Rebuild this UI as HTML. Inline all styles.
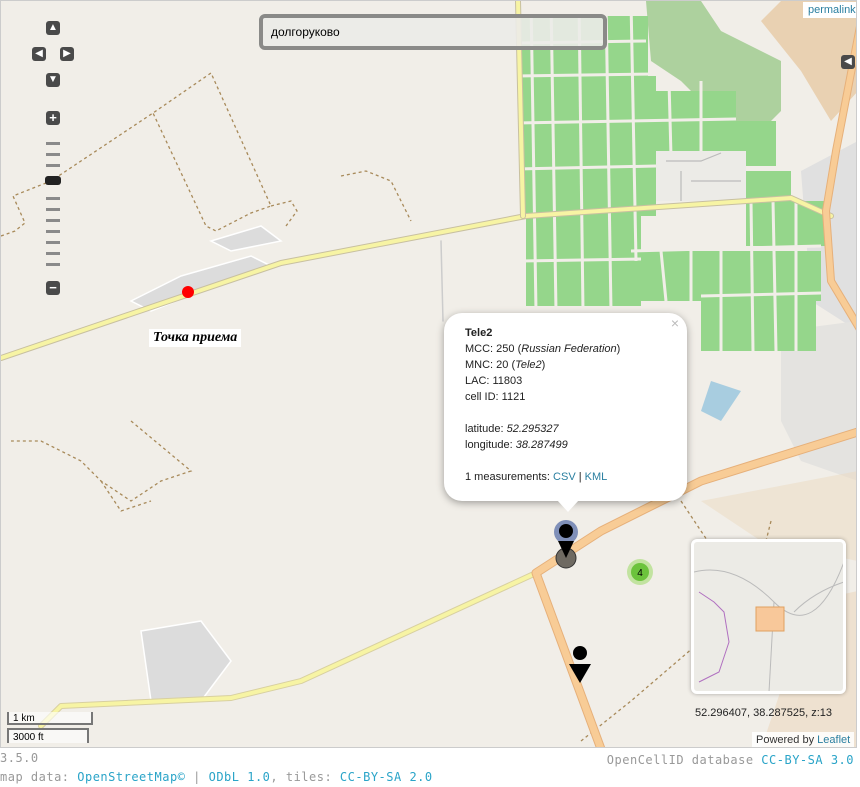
<!DOCTYPE html>
<html><head><meta charset="utf-8"><style>
body{margin:0;width:860px;height:787px;background:#fff;overflow:hidden;font-family:"Liberation Sans",sans-serif;position:relative}
#map{position:absolute;left:0;top:0;width:857px;height:748px;border:1px solid #ccc;box-sizing:border-box;overflow:hidden;background:#f1eee8}
.btn{position:absolute;width:14px;height:14px;background:#4a4a4a;border-radius:3px;color:#fff;font-size:10px;line-height:14px;text-align:center}
.tick{position:absolute;left:45px;width:14px;height:3px;background:#8a8a8a}
.foot{position:absolute;font-family:"DejaVu Sans Mono","Liberation Mono",monospace;font-size:12px;color:#999;letter-spacing:0.5px}
.foot a{color:#2aa4c8;text-decoration:none}
</style></head><body>
<div id="map">
<svg width="857" height="748" style="position:absolute;left:0;top:0">
<polygon points="780,0 857,0 857,90 830,120 800,70 760,20" fill="#e9d1b2"/>
<polygon points="800,170 857,140 857,330 810,300" fill="#e0e0e0"/>
<polygon points="645,0 700,0 720,30 780,60 780,110 760,130 720,120 680,80 650,60" fill="#add19e"/>
<polygon points="780,330 857,320 857,480 800,460 780,420" fill="#e4e3e0"/>
<polygon points="700,500 857,470 857,560 760,540" fill="#ecd9c0" opacity=".5"/>
<polygon points="810,600 857,590 857,748 760,748" fill="#ecd9c0" opacity=".6"/>
<g fill="#95d68b">
<rect x="517" y="15" width="130" height="60"/>
<rect x="520" y="75" width="135" height="140"/>
<rect x="525" y="215" width="115" height="90"/>
<rect x="640" y="90" width="95" height="65"/>
<rect x="735" y="120" width="40" height="45"/>
<rect x="745" y="170" width="45" height="30"/>
<rect x="745" y="200" width="80" height="45"/>
<rect x="635" y="250" width="185" height="50"/>
<rect x="700" y="300" width="115" height="50"/>
</g>
<g stroke="#f1eee8" stroke-width="3">
<line x1="530" y1="0" x2="535" y2="310"/><line x1="550" y1="0" x2="555" y2="310"/><line x1="578" y1="0" x2="582" y2="310"/><line x1="605" y1="0" x2="610" y2="310"/><line x1="630" y1="0" x2="635" y2="260"/>
<line x1="668" y1="80" x2="670" y2="155"/><line x1="700" y1="80" x2="700" y2="155"/>
<line x1="660" y1="250" x2="665" y2="300"/><line x1="690" y1="250" x2="690" y2="300"/><line x1="720" y1="250" x2="720" y2="350"/><line x1="750" y1="200" x2="752" y2="350"/><line x1="772" y1="200" x2="775" y2="350"/><line x1="795" y1="200" x2="795" y2="350"/>
<line x1="515" y1="42" x2="645" y2="40"/><line x1="515" y1="75" x2="655" y2="73"/><line x1="515" y1="122" x2="735" y2="118"/><line x1="515" y1="168" x2="655" y2="165"/><line x1="520" y1="260" x2="640" y2="258"/><line x1="630" y1="250" x2="820" y2="245"/><line x1="700" y1="295" x2="820" y2="292"/>
</g>
<rect x="655" y="150" width="90" height="50" fill="#ecebe7"/>
<g stroke="#bbb" stroke-width="1.2" fill="none"><polyline points="665,160 700,160 720,152"/><polyline points="680,170 680,200"/><polyline points="690,180 740,180"/></g>
<g fill="none" stroke="#a88a5a" stroke-width="1.3" stroke-dasharray="3,3">
<polyline points="0,235 14,230 24,222 12,195 50,180 152,112 210,72 270,205 250,212 215,230 205,225 152,112"/>
<polyline points="270,205 290,200 296,210 285,225"/>
<polyline points="340,175 365,170 390,180 410,220"/>
<polyline points="130,420 190,470 160,480 130,500 100,480 80,460 40,440 10,440"/>
<polyline points="100,480 120,510 150,500"/>
<polyline points="680,500 700,530 720,560"/>
<polyline points="770,520 760,560 770,600"/>
<polyline points="580,740 630,700 700,640"/>
</g>
<g fill="#dcdcdc" stroke="#fff" stroke-width="1.5">
<polygon points="130,300 180,275 250,255 270,265 200,290 150,310"/>
<polygon points="210,240 260,225 280,240 230,250"/>
<polygon points="140,630 200,620 230,660 200,700 150,700"/>
</g>
<polygon points="710,380 740,390 720,420 700,410" fill="#a8cde0"/>
<g fill="none" stroke-linecap="round" stroke-linejoin="round">
<polyline points="0,357 280,262 525,215 790,197 830,215" stroke="#c8c0a0" stroke-width="6"/>
<polyline points="0,357 280,262 525,215 790,197 830,215" stroke="#f7f4a4" stroke-width="4"/>
<polyline points="517,0 522,215" stroke="#c8c0a0" stroke-width="6"/>
<polyline points="517,0 522,215" stroke="#f7f4a4" stroke-width="4"/>
<polyline points="535,572 300,680 230,697 60,705 40,725" stroke="#d8d0a0" stroke-width="6"/>
<polyline points="535,572 300,680 230,697 60,705 40,725" stroke="#f7f4a4" stroke-width="4"/>
<polyline points="860,430 700,480 600,530 535,572 600,748" stroke="#e6b07a" stroke-width="9"/>
<polyline points="860,430 700,480 600,530 535,572 600,748" stroke="#f8cc96" stroke-width="7"/>
<polyline points="860,20 835,150 825,210 830,280 860,330" stroke="#e6b07a" stroke-width="8"/>
<polyline points="860,20 835,150 825,210 830,280 860,330" stroke="#f8cc96" stroke-width="6"/>
<polyline points="440,240 442,320" stroke="#ccc" stroke-width="1.5"/>
</g>
<circle cx="187" cy="291" r="6" fill="#f00"/>
<circle cx="639" cy="571" r="13" fill="#b7e08d" opacity=".8"/>
<circle cx="639" cy="571" r="9" fill="#6cc33c"/>
<text x="639" y="575" font-size="10" text-anchor="middle" font-family="Liberation Sans">4</text>
<circle cx="565" cy="557" r="10" fill="#6f6a62" stroke="#333"/>
<circle cx="565" cy="531" r="12" fill="#7f8fb8"/>
<circle cx="565" cy="530" r="7" fill="#000"/>
<polygon points="557,540 573,540 565,557" fill="#000"/>
<circle cx="579" cy="652" r="7" fill="#000"/>
<polygon points="568,663 590,663 579,682" fill="#000"/>
</svg>
<div class="btn" style="left:45px;top:20px">▲</div>
<div class="btn" style="left:31px;top:46px">◀</div>
<div class="btn" style="left:59px;top:46px">▶</div>
<div class="btn" style="left:45px;top:72px">▼</div>
<div class="btn" style="left:45px;top:110px;font-size:13px;font-weight:bold">+</div>
<div class="tick" style="top:141px"></div><div class="tick" style="top:152px"></div><div class="tick" style="top:163px"></div>
<div style="position:absolute;left:44px;top:175px;width:16px;height:9px;background:#222;border-radius:3px"></div>
<div class="tick" style="top:196px"></div><div class="tick" style="top:207px"></div><div class="tick" style="top:218px"></div><div class="tick" style="top:229px"></div><div class="tick" style="top:240px"></div><div class="tick" style="top:251px"></div><div class="tick" style="top:262px"></div>
<div class="btn" style="left:45px;top:280px;font-size:13px;font-weight:bold">−</div>
<div style="position:absolute;left:258px;top:13px;width:340px;height:28px;border:4px solid #8a8a88;border-radius:6px;background:rgba(235,235,232,.9)"><span style="position:absolute;left:8px;top:7px;font-size:12px">долгоруково</span></div>
<div style="position:absolute;left:802px;top:1px;background:#fff;padding:2px 5px;font-size:11px;color:#2a7fa0">permalink</div>
<div class="btn" style="left:840px;top:54px">◀</div>
<div style="position:absolute;left:148px;top:328px;background:#fff;padding:1px 4px;font:italic bold 14px 'Liberation Serif',serif">Точка приема</div>
<div style="position:absolute;left:443px;top:312px;width:243px;height:188px;background:#fff;border-radius:18px;box-shadow:0 2px 8px rgba(0,0,0,.35);font-size:11px;line-height:16px;color:#222;padding:12px 0 0 21px;box-sizing:border-box">
<span style="position:absolute;right:8px;top:2px;color:#bbb;font-size:14px">×</span>
<b>Tele2</b><br>MCC: 250 (<i>Russian Federation</i>)<br>MNC: 20 (<i>Tele2</i>)<br>LAC: 11803<br>cell ID: 1121<br><br>latitude: <i>52.295327</i><br>longitude: <i>38.287499</i><br><br>1 measurements: <span style="color:#2a7fa0">CSV</span> | <span style="color:#2a7fa0">KML</span></div>
<div style="position:absolute;left:556px;top:499px;width:0;height:0;border-left:11px solid transparent;border-right:11px solid transparent;border-top:12px solid #fff"></div>
<div style="position:absolute;left:690px;top:538px;width:155px;height:155px;border:3px solid #fff;border-radius:6px;box-shadow:0 0 4px rgba(0,0,0,.3);background:#ecebe6;box-sizing:border-box;overflow:hidden">
<svg width="150" height="150"><g fill="none" stroke="#bbb" stroke-width="1"><path d="M0,30 Q40,20 80,60 T150,20"/><path d="M80,60 L75,150"/><path d="M100,70 Q120,50 150,40"/></g><path d="M5,50 L20,60 L30,70 L35,100 L25,130 L5,140" fill="none" stroke="#b070c0"/><rect x="62" y="65" width="28" height="24" fill="#f8c89a" stroke="#e0a060"/></svg></div>
<div style="position:absolute;left:694px;top:706px;font-size:11px;color:#222">52.296407, 38.287525, z:13</div>
<div style="position:absolute;left:751px;top:731px;background:rgba(255,255,255,.85);padding:2px 4px;font-size:11px;color:#333">Powered by <span style="color:#2a7fa0">Leaflet</span></div>
<div style="position:absolute;left:6px;top:711px;width:86px;height:13px;border:2px solid #777;border-top:none;background:rgba(255,255,255,.6);font-size:10px;padding-left:4px;line-height:13px;box-sizing:border-box">1 km</div>
<div style="position:absolute;left:6px;top:727px;width:82px;height:15px;border:2px solid #777;border-bottom:none;background:rgba(255,255,255,.6);font-size:10px;padding-left:4px;line-height:15px;box-sizing:border-box">3000 ft</div>
</div>
<div class="foot" style="left:0;top:751px">3.5.0</div>
<div class="foot" style="left:0;top:770px">map data: <a>OpenStreetMap©</a> | <a>ODbL 1.0</a>, tiles: <a>CC-BY-SA 2.0</a></div>
<div class="foot" style="right:6px;top:753px">OpenCellID database <a>CC-BY-SA 3.0</a></div>
</body></html>
